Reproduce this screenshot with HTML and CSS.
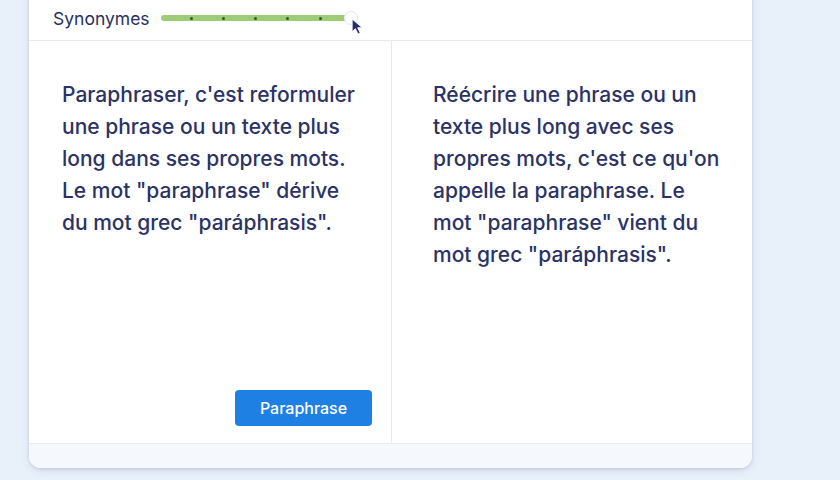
FILE: index.html
```html
<!DOCTYPE html>
<html lang="fr">
<head>
<meta charset="utf-8">
<link rel="stylesheet" href="styles.css">
</head>
<body>
<div class="card">
  <div class="head">
    <span class="label">Synonymes</span>
    <div class="slider">
      <div class="track">
        <i class="dot"></i><i class="dot"></i><i class="dot"></i><i class="dot"></i><i class="dot"></i>
      </div>
      <div class="thumb"></div>
      <svg class="cursor" width="14" height="17" viewBox="0 0 13 16"><path d="M1 1 L1 13 L4 10 L6.5 15 L8.6 14 L6.2 9.2 L10.5 9.2 Z" fill="#2b2d6a" stroke="#fff" stroke-width="0.8" stroke-linejoin="round"/></svg>
    </div>
  </div>
  <div class="body">
    <div class="col left">
      <p class="txt">Paraphraser, c'est reformuler<br>une phrase ou un texte plus<br>long dans ses propres mots.<br>Le mot "paraphrase" dérive<br>du mot grec "paráphrasis".</p>
      <button class="btn">Paraphrase</button>
    </div>
    <div class="col right">
      <p class="txt">Réécrire une phrase ou un<br>texte plus long avec ses<br>propres mots, c'est ce qu'on<br>appelle la paraphrase. Le<br>mot "paraphrase" vient du<br>mot grec "paráphrasis".</p>
    </div>
  </div>
  <div class="foot"></div>
</div>
</body>
</html>
```
FILE: styles.css
```css
html, body { margin: 0; padding: 0; }
body {
  width: 840px; height: 480px; overflow: hidden;
  background: #e8f0fa;
  font-family: Inter, "Noto Sans", sans-serif;
  color: #283061;
}
.card {
  margin: -12px 0 0 29px;
  width: 723px;
  background: #fff;
  border-radius: 12px;
  box-shadow: 0 1px 3px rgba(60, 80, 120, 0.18), 0 3px 8px rgba(60, 80, 120, 0.10);
  overflow: hidden;
  display: flex; flex-direction: column;
}
.head {
  height: 53px; box-sizing: border-box;
  padding: 8px 0 0 24px;
  display: flex; align-items: center;
  border-bottom: 1px solid #e6e9ef;
}
.label { font-size: 17.5px; font-weight: 400; color: #283061; }
.slider { position: relative; margin-left: 11px; width: 190px; height: 16px; display: flex; align-items: center; }
.track {
  width: 190px; height: 6px; border-radius: 3px;
  background: #9dcb78;
  display: flex; align-items: center; justify-content: flex-start;
  gap: 29.3px; padding-left: 29px; box-sizing: border-box;
}
.dot { display: block; width: 3px; height: 3px; border-radius: 50%; background: #2e5a2a; }
.thumb {
  position: absolute; left: 183px; top: 1px;
  width: 14px; height: 14px; border-radius: 50%;
  background: #fff; border: 1px solid #e3e6ec; box-sizing: border-box;
}
.cursor { position: absolute; left: 190px; top: 8px; }
.body { display: flex; height: 402px; }
.col { box-sizing: border-box; display: flex; flex-direction: column; }
.left { width: 363px; border-right: 1px solid #e6e9ef; padding: 38px 19px 17px 33px; }
.right { flex: 1; padding: 38px 20px 17px 41px; }
.txt { margin: 0; font-size: 21px; line-height: 32px; font-weight: 500; color: #2a3266; }
.btn {
  margin-top: auto; align-self: flex-end;
  width: 137px; height: 36px;
  border: 0; border-radius: 4px;
  background: #1f80e3; color: #fff;
  font-family: Inter, sans-serif; font-size: 16px; font-weight: 500;
}
.foot { height: 24px; background: #f5f8fc; border-top: 1px solid #e8ecf2; }
```
